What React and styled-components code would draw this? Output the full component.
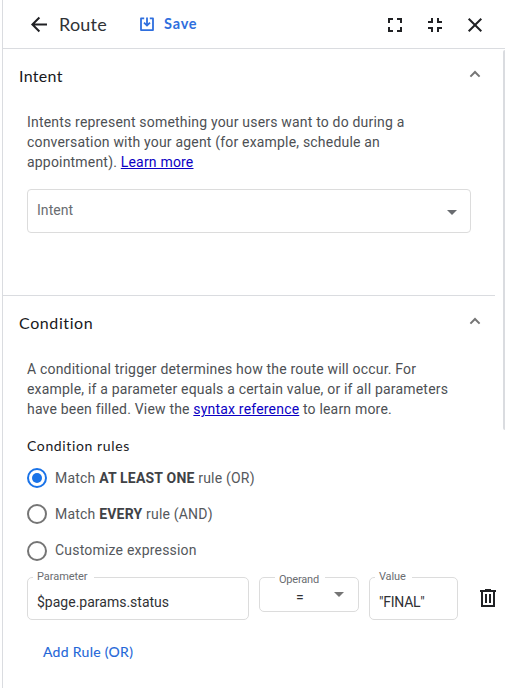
import React from "react";
import styled, { createGlobalStyle } from "styled-components";

const GlobalStyle = createGlobalStyle`
  *, *::before, *::after { box-sizing: border-box; }
  html, body { margin: 0; padding: 0; background: #fff; overflow: hidden; }
  body { font-family: Roboto, "Liberation Sans", sans-serif; }
  svg { display: block; flex: none; }
`;

const headingFont = `Lato, Inter, sans-serif`;

const Panel = styled.div`
  width: 505px;
  height: 688px;
  padding-left: 2px;
  display: flex;
  overflow: hidden;
`;

const PanelInner = styled.div`
  flex: 1;
  border-left: 1px solid #dadce0;
  display: flex;
  flex-direction: column;
`;

const Header = styled.header`
  height: 49px;
  flex: none;
  border-bottom: 1px solid #dadce0;
  display: flex;
  align-items: center;
  padding: 0 18px 0 24px;
`;

const IconButton = styled.button`
  border: 0;
  padding: 0;
  margin: 0;
  background: none;
  color: ${(p) => p.$color || "#202124"};
  display: flex;
  flex: none;
`;

const Title = styled.h1`
  margin: 0 0 0 8px;
  width: 72px;
  font: 400 18px/24px ${headingFont};
  letter-spacing: 0.2px;
  color: #303236;
`;

const SaveButton = styled.button`
  border: 0;
  padding: 0;
  margin-left: 8px;
  background: none;
  display: flex;
  align-items: center;
  gap: 9px;
  color: #2f6fde;
  font: 700 14.5px/20px ${headingFont};
  letter-spacing: 0.8px;
`;

const HeaderActions = styled.div`
  margin-left: auto;
  display: flex;
  align-items: center;
  gap: 16px;
`;

const Scroller = styled.div`
  flex: 1;
  display: flex;
`;

const Sections = styled.div`
  width: 492px;
`;

const Scrollbar = styled.div`
  width: 2px;
  height: 380px;
  margin-left: auto;
  margin-top: 1px;
  border-radius: 2px 0 0 2px;
  background: #dadce0;
`;

const Section = styled.section`
  height: ${(p) => p.$height}px;
  border-bottom: ${(p) => (p.$divided ? "1px solid #dadce0" : "0")};
`;

const SectionHead = styled.div`
  height: 63px;
  padding: 15px 8px 0 16px;
  display: flex;
  justify-content: space-between;
  align-items: flex-start;
`;

const SectionTitle = styled.h2`
  margin: 0;
  font: 400 16px/24px ${headingFont};
  letter-spacing: ${(p) => p.$spacing}px;
  color: #18191c;
`;

const SectionBody = styled.div`
  padding-left: 24px;
`;

const Description = styled.p`
  margin: 0;
  font-size: 14px;
  line-height: 20px;
  letter-spacing: 0.19px;
  color: #4d5054;
  white-space: nowrap;
`;

const Link = styled.a`
  color: #0b00c4;
  text-decoration: underline;
`;

const Select = styled.div`
  margin-top: 17px;
  width: 444px;
  height: 44px;
  border: 1px solid #dcdcdc;
  border-radius: 4px;
  padding: 0 13px 0 9px;
  display: flex;
  align-items: center;
  justify-content: space-between;
  font-size: 14px;
  letter-spacing: 0.05px;
  color: #696c70;

  span { margin-top: -3px; }
  svg { margin-top: 3px; }
`;

const RulesTitle = styled.h3`
  margin: 17px 0 12px;
  font: 400 14px/20px ${headingFont};
  letter-spacing: 0.62px;
  color: #18191c;
`;

const RadioList = styled.div`
  display: flex;
  flex-direction: column;
  gap: 16.35px;
`;

const RadioRow = styled.label`
  display: flex;
  align-items: center;
  gap: 8px;
  height: 20px;
  font-size: 14px;
  letter-spacing: 0.2px;
  color: #55585c;
  white-space: pre;

  span:last-child { margin-top: -1px; }
  b { font-weight: 700; color: #3f4246; letter-spacing: 0.2px; }
`;

const Radio = styled.span`
  width: 20px;
  height: 20px;
  flex: none;
  border-radius: 50%;
  border: 2px solid ${(p) => (p.$on ? "#1a73e8" : "#757575")};
  display: flex;
  align-items: center;
  justify-content: center;

  &::after {
    content: "";
    width: 10px;
    height: 10px;
    border-radius: 50%;
    background: ${(p) => (p.$on ? "#1a73e8" : "transparent")};
  }
`;

const RuleRow = styled.div`
  display: flex;
  align-items: flex-start;
  margin-top: 16.3px;
`;

const Field = styled.div`
  flex: none;
  margin-right: ${(p) => p.$after}px;
  padding-left: ${(p) => p.$inset || 9}px;
  width: ${(p) => p.$width}px;
  height: ${(p) => p.$height}px;
  border: 1px solid #dcdcdc;
  border-radius: 5px;
  position: relative;
  display: flex;
  align-items: flex-start;
  font-size: 14px;
  line-height: 20px;
  color: #303134;
`;

/* The label sits over the outline and interrupts it. */
const FieldLabel = styled.span`
  position: absolute;
  top: ${(p) => p.$top}px;
  left: ${(p) => p.$left}px;
  padding: 0 6px 0 4px;
  background: #fff;
  font-size: 11px;
  line-height: 14px;
  letter-spacing: ${(p) => p.$spacing || 0}px;
  color: #6a6d71;
`;

const FieldValue = styled.span`
  margin-top: ${(p) => p.$top}px;
  letter-spacing: ${(p) => p.$spacing}px;
`;

const OperandArrow = styled.span`
  margin: 14px 0 0 30px;
  color: #757575;
`;

const DeleteButton = styled(IconButton)`
  margin: 11px 0 0 22px;
`;

const AddRule = styled.button`
  border: 0;
  padding: 0;
  margin: 22px 0 0 16px;
  background: none;
  font: 400 14px/20px ${headingFont};
  letter-spacing: 0.3px;
  -webkit-text-stroke: 0.1px currentColor;
  color: #2467d8;
`;

const BackIcon = () => (
  <svg width="24" height="24" viewBox="0 0 24 24" fill="none" stroke="currentColor" strokeWidth="2">
    <path d="M20 12.5H5.5M12.4 5.5l-7 7 7 7" />
  </svg>
);

const SaveIcon = () => (
  <svg width="16" height="16" viewBox="0 0 16 16" fill="none" stroke="currentColor" strokeWidth="1.8">
    <path d="M5.2 2.4H2v11.7h12V2.4h-3.2" strokeLinejoin="round" />
    <path d="M8 1.5v7.8M5 6.6l3 3 3-3" />
  </svg>
);

const ExpandIcon = () => (
  <svg width="24" height="24" viewBox="0 0 24 24" fill="none" stroke="currentColor" strokeWidth="2">
    <path d="M10 7H6v4M14 7h4v4M10 19H6v-4M14 19h4v-4" />
  </svg>
);

const CollapseIcon = () => (
  <svg width="24" height="24" viewBox="0 0 24 24" fill="none" stroke="currentColor" strokeWidth="2">
    <path d="M5 10h4V6M19 10h-4V6M5 16h4v4M19 16h-4v4" />
  </svg>
);

const CloseIcon = () => (
  <svg width="24" height="24" viewBox="0 0 24 24" fill="none" stroke="currentColor" strokeWidth="2">
    <path d="m5.7 6.7 12.6 12.6M18.3 6.7 5.7 19.3" />
  </svg>
);

const ChevronUp = () => (
  <svg width="24" height="24" viewBox="0 0 24 24" fill="none" stroke="currentColor" strokeWidth="2">
    <path d="m7.4 12.6 4.6-4.6 4.6 4.6" />
  </svg>
);

const Caret = () => (
  <svg width="10" height="5" viewBox="0 0 10 5" fill="currentColor">
    <path d="M0 0h10L5 5z" />
  </svg>
);

const TrashIcon = () => (
  <svg width="16" height="20" viewBox="0 0 16 20" fill="none" stroke="currentColor" strokeWidth="2">
    <path d="M0 3h16M5 2h6" />
    <path d="M2 3v15h12V3" />
    <path d="M6 6v9M10 6v9" />
  </svg>
);

export default function App() {
  return (
    <>
      <GlobalStyle />
      <Panel>
        <PanelInner>
          <Header>
            <IconButton aria-label="Back"><BackIcon /></IconButton>
            <Title>Route</Title>
            <SaveButton><SaveIcon />Save</SaveButton>
            <HeaderActions>
              <IconButton aria-label="Full screen"><ExpandIcon /></IconButton>
              <IconButton aria-label="Exit full screen"><CollapseIcon /></IconButton>
              <IconButton aria-label="Close"><CloseIcon /></IconButton>
            </HeaderActions>
          </Header>
          <Scroller>
            <Sections>
              <Section $height={247} $divided>
                <SectionHead>
                  <SectionTitle $spacing={0.3}>Intent</SectionTitle>
                  <IconButton $color="#757575" aria-label="Collapse intent"><ChevronUp /></IconButton>
                </SectionHead>
                <SectionBody>
                  <Description>
                    Intents represent something your users want to do during a<br />
                    conversation with your agent (for example, schedule an<br />
                    appointment). <Link>Learn more</Link>
                  </Description>
                  <Select><span>Intent</span><Caret /></Select>
                </SectionBody>
              </Section>
              <Section $height={392}>
                <SectionHead>
                  <SectionTitle $spacing={0.6}>Condition</SectionTitle>
                  <IconButton $color="#757575" aria-label="Collapse condition"><ChevronUp /></IconButton>
                </SectionHead>
                <SectionBody>
                  <Description>
                    A conditional trigger determines how the route will occur. For<br />
                    example, if a parameter equals a certain value, or if all parameters<br />
                    have been filled. View the <Link>syntax reference</Link> to learn more.
                  </Description>
                  <RulesTitle>Condition rules</RulesTitle>
                  <RadioList>
                    <RadioRow><Radio $on /><span>Match <b>AT LEAST ONE</b> rule (OR)</span></RadioRow>
                    <RadioRow><Radio /><span>Match <b>EVERY</b> rule (AND)</span></RadioRow>
                    <RadioRow><Radio /><span>Customize expression</span></RadioRow>
                  </RadioList>
                  <RuleRow>
                    <Field $width={222} $height={43} $after={10}>
                      <FieldLabel $top={-8} $left={5} $spacing={-0.05}>Parameter</FieldLabel>
                      <FieldValue $top={14} $spacing={0}>$page.params.status</FieldValue>
                    </Field>
                    <Field $width={100} $height={35} $after={10} $inset={36}>
                      <FieldLabel $top={-5} $left={15} $spacing={-0.2}>Operand</FieldLabel>
                      <FieldValue $top={9} $spacing={0}>=</FieldValue>
                      <OperandArrow><Caret /></OperandArrow>
                    </Field>
                    <Field $width={89} $height={43} $after={0}>
                      <FieldLabel $top={-8} $left={5} $spacing={-0.15}>Value</FieldLabel>
                      <FieldValue $top={14} $spacing={-0.25}>"FINAL"</FieldValue>
                    </Field>
                    <DeleteButton aria-label="Delete rule"><TrashIcon /></DeleteButton>
                  </RuleRow>
                  <AddRule>Add Rule (OR)</AddRule>
                </SectionBody>
              </Section>
            </Sections>
            <Scrollbar />
          </Scroller>
        </PanelInner>
      </Panel>
    </>
  );
}
